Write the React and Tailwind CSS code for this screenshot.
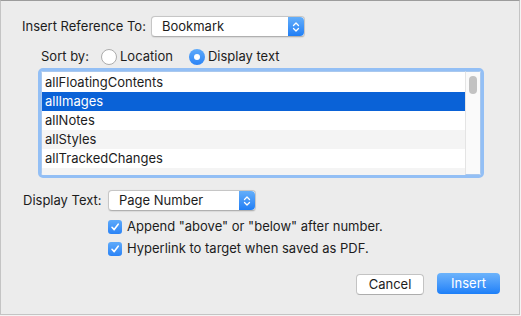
import React from "react";

const font = { fontFamily: "Inter, 'Liberation Sans', Arial, sans-serif" };

function Stepper() {
  return (
    <div className="w-[16px] self-stretch bg-gradient-to-b from-[#63aefa] to-[#1f7ef5] rounded-r-[4px] flex items-center justify-center">
      <svg width="8" height="12" viewBox="0 0 8 12" fill="none" stroke="white" strokeWidth="1.3" strokeLinecap="round" strokeLinejoin="round">
        <path d="M1.5 4.5 L4 2 L6.5 4.5" />
        <path d="M1.5 7.5 L4 10 L6.5 7.5" />
      </svg>
    </div>
  );
}

function Popup({ label, w }) {
  return (
    <div className={`${w} h-[21px] bg-white rounded-[4px] border border-[#c6c6c6] border-b-[#b0b0b0] flex items-stretch shadow-[0_0.5px_1px_rgba(0,0,0,0.08)]`}>
      <div className="flex-1 pl-[10px] flex items-center text-[13px] text-[#1c1c1c]">{label}</div>
      <Stepper />
    </div>
  );
}

function Radio({ checked, label }) {
  return (
    <div className="flex items-center gap-[3px]">
      {checked ? (
        <div className="w-[16px] h-[16px] rounded-full bg-gradient-to-b from-[#5eaafa] to-[#2a83f6] flex items-center justify-center">
          <div className="w-[6px] h-[6px] rounded-full bg-white" />
        </div>
      ) : (
        <div className="w-[16px] h-[16px] rounded-full bg-white border border-[#acacac]" />
      )}
      <span className="text-[13px] text-[#1c1c1c]">{label}</span>
    </div>
  );
}

function Check({ label }) {
  return (
    <div className="h-[16px] flex items-center gap-[5px]">
      <div className="w-[14px] h-[14px] rounded-[3px] bg-gradient-to-b from-[#5eaafa] to-[#2a83f6] flex items-center justify-center">
        <svg width="10" height="10" viewBox="0 0 10 10" fill="none" stroke="white" strokeWidth="1.6" strokeLinecap="round" strokeLinejoin="round">
          <path d="M2 5.3 L4.2 7.6 L8.2 2.2" />
        </svg>
      </div>
      <span className="text-[13px] text-[#1c1c1c]">{label}</span>
    </div>
  );
}

const rows = [
  { t: "allFloatingContents", bg: "bg-white" },
  { t: "allImages", bg: "bg-[#0a62d7]", sel: true },
  { t: "allNotes", bg: "bg-white" },
  { t: "allStyles", bg: "bg-[#f4f4f4]" },
  { t: "allTrackedChanges", bg: "bg-white" },
  { t: "", bg: "bg-[#f4f4f4]" },
];

export default function App() {
  return (
    <div className="w-[521px] h-[316px] bg-[#f4f4f4]" style={font}>
      <div className="w-[520px] h-[315px] bg-[#ececec] border border-[#c4c4c4] border-t-[#9c9c9c] flex flex-col">
        <div className="mt-[15px] pl-[21px] flex items-center h-[21px]">
          <div className="w-[129px] text-[13px] text-[#1c1c1c]">Insert Reference To:</div>
          <Popup label="Bookmark" w="w-[154px]" />
        </div>
        <div className="mt-[12px] pl-[40px] flex items-center h-[16px]">
          <div className="w-[60px] text-[13px] text-[#1c1c1c]">Sort by:</div>
          <Radio label="Location" />
          <div className="w-[16px]" />
          <Radio checked label="Display text" />
        </div>
        <div className="mt-[3px] ml-[37px] w-[446px] h-[110px] rounded-[5px] border-[3px] border-[#93bff5] bg-white flex overflow-hidden">
          <div className="flex-1 border border-r-0 border-[#a9c8ee] flex flex-col pt-[1px]">
            {rows.map((r, i) => (
              <div key={i} className={`h-[19px] shrink-0 pl-[3px] flex items-center text-[13px] ${r.bg} ${r.sel ? "text-white" : "text-[#1c1c1c]"}`}>
                {r.t}
              </div>
            ))}
          </div>
          <div className="w-[16px] bg-[#fafafa] border-l border-[#e4e4e4] border-y border-r border-y-[#a9c8ee] border-r-[#a9c8ee] flex justify-center pt-[4px]">
            <div className="w-[8px] h-[18px] rounded-full bg-[#c2c2c2]" />
          </div>
        </div>
        <div className="mt-[12px] pl-[22px] flex items-center h-[21px]">
          <div className="w-[85px] text-[13px] text-[#1c1c1c]">Display Text:</div>
          <Popup label="Page Number" w="w-[148px]" />
        </div>
        <div className="mt-[8px] pl-[107px]">
          <Check label={'Append "above" or "below" after number.'} />
        </div>
        <div className="mt-[6px] pl-[107px]">
          <Check label="Hyperlink to target when saved as PDF." />
        </div>
        <div className="mt-[16px] pr-[19px] flex justify-end items-start gap-[13px]">
          <div className="mt-[1px] w-[68px] h-[21px] bg-white rounded-[4px] border border-[#c3c3c3] border-b-[#adadad] flex items-center justify-center text-[13px] text-[#1c1c1c]">
            Cancel
          </div>
          <div className="w-[63px] h-[21px] rounded-[4px] bg-gradient-to-b from-[#6cb3fb] to-[#1b7ff8] flex items-center justify-center text-[13px] text-white">
            Insert
          </div>
        </div>
      </div>
    </div>
  );
}
